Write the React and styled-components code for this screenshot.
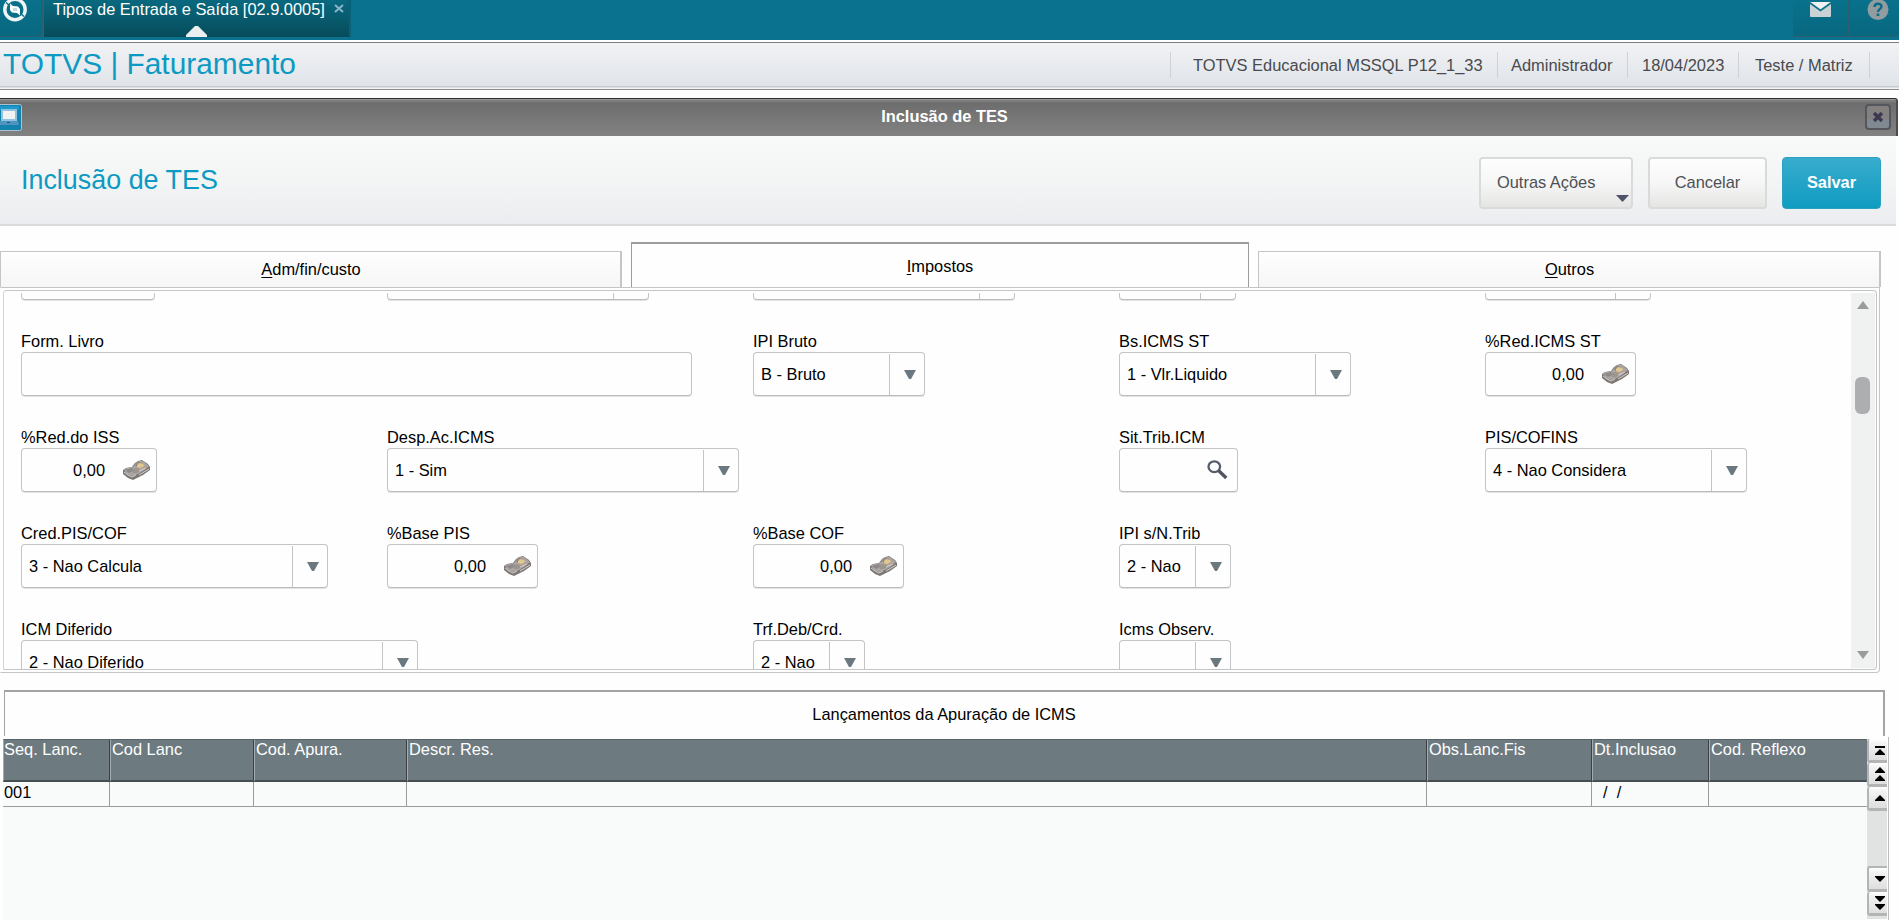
import React from 'react';
import styled, { createGlobalStyle } from 'styled-components';

const GlobalStyle = createGlobalStyle`
  *, *::before, *::after { box-sizing: border-box; }
  html, body { margin: 0; padding: 0; background: #fefefe; overflow: hidden; }
  body { font-family: "Liberation Sans", Arial, sans-serif; font-size: 16.4px; line-height: 20px; color: #000; }
`;

const Screen = styled.div`
  width: 1899px;
  height: 920px;
  display: flex;
  flex-direction: column;
  overflow: hidden;
  white-space: nowrap;
`;

/* ---------- Top bar ---------- */
const TopBar = styled.header`
  height: 40px;
  flex: none;
  display: flex;
  align-items: flex-start;
  background: #0a728f;
`;

const BarCell = styled.div`
  width: ${(p) => p.$w}px;
  height: 37px;
  flex: none;
  display: flex;
  padding-left: ${(p) => p.$pad}px;
  background: linear-gradient(#09718c, #086880);
  border-right: 2px solid ${(p) => (p.$edge ? '#2a5f70' : 'transparent')};
  border-bottom: 1px solid #2a5f70;
`;

const ProgramTab = styled.div`
  width: 307px;
  height: 37px;
  margin-left: 1px;
  padding: 0 0 0 9px;
  background: linear-gradient(#09697f, #064c5b);
  border-right: 2px solid #0a6177;
  color: #fff;
  display: grid;
  grid-template-columns: 281px 12px;
  grid-template-rows: 26px 11px;
`;

const TabName = styled.span`
  line-height: 19px;
`;

const CloseMark = styled.svg`
  margin-top: 4px;
`;

const TabPointer = styled.svg`
  grid-column: 1 / -1;
  margin-left: 133px;
`;

const Spacer = styled.div`
  flex: 1;
`;

/* ---------- Module bar ---------- */
const ModuleBar = styled.div`
  height: 48px;
  flex: none;
  margin-top: 2px;
  display: flex;
  border-top: 1px solid #7d7d82;
  border-bottom: 1px solid #8b8b90;
  background: linear-gradient(#f1f2f4, #e0e4e9 43px, #c6cbcf 43px, #c6cbcf 44px, #f3f4f5 45px);
`;

const ModuleName = styled.h1`
  margin: 0;
  padding-left: 3px;
  width: 1170px;
  font-size: 29.9px;
  font-weight: 400;
  line-height: 41px;
  color: #0d9ac2;
`;

const InfoItem = styled.div`
  width: ${(p) => p.$w}px;
  height: 26px;
  margin-top: 9px;
  padding-left: ${(p) => p.$pad}px;
  border-left: 1px solid #ccd2d5;
  line-height: 27px;
  font-size: 16.45px;
  color: #494a4e;
`;

/* ---------- Dialog ---------- */
const TitleBar = styled.div`
  height: 38px;
  flex: none;
  width: 1898px;
  margin-top: 8px;
  display: flex;
  border-top: 1px solid #2d2d2f;
  border-right: 2px solid #4b4b4f;
  border-radius: 0 3px 0 0;
  background: linear-gradient(#9a9a9a 1px, #7e7e7e 1px, #7a7a7a 3px, #6d6d6d 4px, #828282);
`;

const TitleIcon = styled.svg`
  margin-top: 5px;
`;

const TitleText = styled.div`
  width: 1843px;
  padding-left: 2px;
  text-align: center;
  font-weight: 700;
  line-height: 35px;
  color: #fff;
`;

const CloseBox = styled.button`
  width: 26px;
  height: 26px;
  margin: 5px 0 0 0;
  padding: 0;
  display: flex;
  align-items: center;
  justify-content: center;
  border: 2px solid #55555d;
  border-radius: 4px;
  background: linear-gradient(#858080 60%, #808992 62%);
`;

const ActionBar = styled.div`
  width: 1896px;
  height: 90px;
  flex: none;
  display: flex;
  align-items: flex-start;
  padding: 21px 15px 0 21px;
  gap: 15px;
  background: linear-gradient(#f8f9f9, #f4f5f5 45%, #ecedf0);
  border-bottom: 2px solid #d9dbdc;
`;

const Heading = styled.h2`
  flex: 1;
  margin: 0;
  font-size: 26.9px;
  font-weight: 400;
  line-height: 47px;
  color: #0d9ac2;
`;

const ActionButton = styled.button`
  width: ${(p) => p.$w}px;
  height: 52px;
  padding: 0 ${(p) => (p.$menu ? 2 : 0)}px 2px ${(p) => (p.$menu ? 16 : 0)}px;
  display: flex;
  align-items: center;
  justify-content: ${(p) => (p.$menu ? 'space-between' : 'center')};
  font: ${(p) => (p.$primary ? 700 : 400)} 16.4px "Liberation Sans", Arial, sans-serif;
  color: ${(p) => (p.$primary ? '#fff' : '#4c5055')};
  border: ${(p) => (p.$primary ? '1px solid #2aa0c3' : '2px solid #d9dada')};
  border-radius: 4px;
  background: ${(p) =>
    p.$primary ? 'linear-gradient(#38accd, #0f9cc1)' : 'linear-gradient(#fefefe, #f6f6f6 50%, #e5e5e4)'};
`;

const MenuArrow = styled.svg`
  margin-top: 33px;
`;

/* ---------- Tabs ---------- */
const Tabs = styled.div`
  height: 61px;
  flex: none;
  display: flex;
  align-items: flex-end;
  gap: 9px;
`;

const Tab = styled.div`
  width: ${(p) => p.$w}px;
  height: ${(p) => (p.$active ? 45 : 36)}px;
  text-align: center;
  line-height: ${(p) => (p.$active ? 45 : 34)}px;
  border: ${(p) => (p.$active ? '2px solid #9b9c9c' : '1px solid #c3c5c6')};
  border-bottom: 0;
  border-left-width: 1px;
  border-right-width: ${(p) => (p.$active ? 1 : 2)}px;
  padding-left: ${(p) => (p.$active ? 0 : 1)}px;
  background: ${(p) => (p.$active ? '#fefefe' : 'linear-gradient(#fefefe, #f6f6f6)')};
  u { text-decoration-thickness: 1px; text-underline-offset: 2px; }
`;

const Panel = styled.section`
  width: 1880px;
  height: 386px;
  flex: none;
  border: 1px solid #c3c5c6;
  border-left-color: transparent;
  border-radius: 0 0 4px 0;
  padding: 2px 2px 2px 2px;
`;

const PanelInner = styled.div`
  height: 380px;
  display: flex;
  padding: 2px 1px 0 0;
  border: 1px solid #c3c5c6;
  border-left-color: #d3d5d6;
  border-radius: 4px 4px 4px 0;
`;

const FormView = styled.div`
  flex: 1;
  overflow: hidden;
`;

const FormGrid = styled.div`
  margin: -61px 0 0 17px;
  display: grid;
  grid-template-columns: repeat(5, 366px);
  grid-auto-rows: 96px;
`;

const Field = styled.div`
  grid-column: ${(p) => p.$col};
  grid-row: ${(p) => p.$row};
  width: ${(p) => p.$w}px;
`;

const Label = styled.div`
  height: 24px;
  line-height: 27px;
`;

const Control = styled.div`
  height: 44px;
  display: flex;
  align-items: center;
  justify-content: ${(p) => (p.$end ? 'flex-end' : 'space-between')};
  padding: 0 ${(p) => p.$pr}px 0 7px;
  border: 1px solid #c2c4c5;
  border-bottom-color: #b9bbbc;
  box-shadow: 0 1px 0 #e2e3e3;
  border-radius: 4px;
`;

const Amount = styled.span`
  margin-right: 18px;
`;

const DropButton = styled.span`
  width: 35px;
  height: 41px;
  margin-top: 1px;
  display: flex;
  align-items: center;
  justify-content: center;
  padding: 0 0 1px 5px;
  border-left: 1px solid #c2c4c5;
`;

const ScrollTrack = styled.div`
  width: 24px;
  display: flex;
  flex-direction: column;
  align-items: center;
  padding: 8px 1px 9px 0;
  margin-bottom: 1px;
  background: #f0f2f1;
`;

const ScrollThumb = styled.div`
  width: 15px;
  height: 37px;
  margin: 68px 0 auto;
  border-radius: 6px;
  background: #adaeb0;
`;

/* ---------- Bottom grid ---------- */
const GridTitle = styled.div`
  width: 1881px;
  height: 46px;
  flex: none;
  margin: 17px 0 0 4px;
  border: 2px solid #a3a4a4;
  border-left-width: 1px;
  border-bottom: 0;
  text-align: center;
  line-height: 44px;
`;

const GridArea = styled.div`
  height: 183px;
  width: 1886px;
  margin: 1px 0 0 3px;
  flex: none;
  display: flex;
  border-right: 1px solid #bbbcbe;
`;

const Table = styled.div`
  width: 1864px;
  margin-top: 2px;
  background: #f9fbfa;
`;

const TableRow = styled.div`
  display: grid;
  grid-template-columns: 107px 144px 153px 1020px 165px 117px 158px;
`;

const HeadCell = styled.div`
  height: 43px;
  line-height: 18px;
  color: #fff;
  background: #6d7a80;
  border-top: 1px solid #596266;
  border-bottom: 2px solid #474e51;
  border-left: 1px solid #a3abae;
  border-right: 1px solid ${(p) => (p.$last ? '#6d7a80' : '#3c4042')};
  padding-left: ${(p) => (p.$first ? 0 : 1)}px;
`;

const Cell = styled.div`
  height: 25px;
  padding-left: ${(p) => (p.$indent ? 11 : 1)}px;
  line-height: 21px;
  white-space: pre;
  border-right: ${(p) => (p.$last ? 0 : 1)}px solid #9a9b9c;
  border-bottom: 1px solid #9a9b9c;
`;

const NavColumn = styled.div`
  width: 20px;
  margin: 2px 0 1px;
  display: flex;
  flex-direction: column;
  background: #e1e3e3;
`;

const NavButton = styled.div`
  height: ${(p) => (p.$apart ? 26 : 24)}px;
  flex: none;
  margin-top: ${(p) => (p.$apart ? 55 : 0)}px;
  display: flex;
  align-items: center;
  padding-left: 6px;
  border-left: 2px solid #b2b4b5;
  border-bottom: 3px solid #b2b4b5;
  border-top: ${(p) => (p.$apart ? 2 : 0)}px solid #b2b4b5;
  border-radius: 3px 0 0 3px;
  background: linear-gradient(#fff, #f2f2f2 20%, #dedede);
`;

const BottomRule = styled.div`
  height: 1px;
  flex: none;
  background: #bbbcbe;
`;

/* ---------- Drawings ---------- */
const Down = () => (
  <svg width="12" height="9" viewBox="0 0 12 9"><path d="M0 0H12L7 9H5Z" fill="#6b7880" /></svg>
);

const Calculator = () => (
  <svg width="27" height="20" viewBox="0 0 27 20">
    <path d="M0 10L3 8L9 7L12 3L15 1L19 0L25 4L27 7V10L20 15L14 18L10 20L5 18L0 14Z" fill="#7d7774" />
    <path d="M1 10L4 8L10 7L13 3L16 1L20 1L26 6L20 11L15 14L9 16L4 14Z" fill="#aaa6a4" />
    <path d="M2 10L9 8L12 10L6 13Z" fill="#8d8987" />
    <path d="M9 9L14 8L18 10L14 13L10 13Z" fill="#989492" />
    <path d="M12 5L15 2L18 2L14 7Z" fill="#8b8683" />
    <path d="M14 5L16 3L20 4L21 6L17 8L14 7Z" fill="#e3c78f" />
    <path d="M13 9L15 8L16 9L14 10ZM20 8L23 7L24 8L21 9ZM18 2L20 3L19 4Z" fill="#c99263" />
    <path d="M1 12L5 15L9 17L13 15M16 15L26 9M16 11L23 8" fill="none" stroke="#d5d1cf" strokeWidth="1" />
  </svg>
);

const Search = () => (
  <svg width="21" height="20" viewBox="0 0 21 20">
    <ellipse cx="7.3" cy="6.7" rx="5.8" ry="5.4" fill="none" stroke="#555d6b" strokeWidth="2.3" />
    <path d="M11.5 10.5L19.3 18" stroke="#50545f" strokeWidth="3.3" />
  </svg>
);

const navPaths = {
  first: 'M0 3H10V5H0ZM5 6L10 11V12H0V11Z',
  pageUp: 'M5 0L10 5V6H0V5ZM5 8L10 13V14H0V13Z',
  up: 'M5 4L10 9V10H0V9Z',
  down: 'M0 4H10V5L5 10L0 5Z',
  pageDown: 'M0 0H10V1L5 6L0 1ZM0 8H10V9L5 14L0 9Z',
};

const NavIcon = ({ kind }) => (
  <svg width="10" height="14" viewBox="0 0 10 14"><path d={navPaths[kind]} fill="#000" /></svg>
);

/* ---------- Data ---------- */
const fields = [
  { row: 1, col: 1, w: 134, kind: 'text' },
  { row: 1, col: 2, w: 262, kind: 'select' },
  { row: 1, col: 3, w: 262, kind: 'select' },
  { row: 1, col: 4, w: 117, kind: 'select' },
  { row: 1, col: 5, w: 166, kind: 'select' },
  { row: 2, col: 1, w: 671, kind: 'text', label: 'Form. Livro' },
  { row: 2, col: 3, w: 172, kind: 'select', label: 'IPI Bruto', value: 'B - Bruto' },
  { row: 2, col: 4, w: 232, kind: 'select', label: 'Bs.ICMS ST', value: '1 - Vlr.Liquido' },
  { row: 2, col: 5, w: 151, kind: 'amount', label: '%Red.ICMS ST', value: '0,00' },
  { row: 3, col: 1, w: 136, kind: 'amount', label: '%Red.do ISS', value: '0,00' },
  { row: 3, col: 2, w: 352, kind: 'select', label: 'Desp.Ac.ICMS', value: '1 - Sim' },
  { row: 3, col: 4, w: 119, kind: 'search', label: 'Sit.Trib.ICM' },
  { row: 3, col: 5, w: 262, kind: 'select', label: 'PIS/COFINS', value: '4 - Nao Considera' },
  { row: 4, col: 1, w: 307, kind: 'select', label: 'Cred.PIS/COF', value: '3 - Nao Calcula' },
  { row: 4, col: 2, w: 151, kind: 'amount', label: '%Base PIS', value: '0,00' },
  { row: 4, col: 3, w: 151, kind: 'amount', label: '%Base COF', value: '0,00' },
  { row: 4, col: 4, w: 112, kind: 'select', label: 'IPI s/N.Trib', value: '2 - Nao' },
  { row: 5, col: 1, w: 397, kind: 'select', label: 'ICM Diferido', value: '2 - Nao Diferido' },
  { row: 5, col: 3, w: 112, kind: 'select', label: 'Trf.Deb/Crd.', value: '2 - Nao' },
  { row: 5, col: 4, w: 112, kind: 'select', label: 'Icms Observ.' },
];

const columns = ['Seq. Lanc.', 'Cod Lanc', 'Cod. Apura.', 'Descr. Res.', 'Obs.Lanc.Fis', 'Dt.Inclusao', 'Cod. Reflexo'];
const firstRow = ['001', '', '', '', '', '/  /', ''];

function FormField({ row, col, w, kind, label, value }) {
  return (
    <Field $row={row} $col={col} $w={w}>
      <Label>{label}</Label>
      {kind === 'select' && (
        <Control $pr={0}>
          <span>{value}</span>
          <DropButton><Down /></DropButton>
        </Control>
      )}
      {kind === 'amount' && (
        <Control $pr={6} $end>
          <Amount>{value}</Amount>
          <Calculator />
        </Control>
      )}
      {kind === 'search' && <Control $pr={9} $end><Search /></Control>}
      {kind === 'text' && <Control $pr={8} />}
    </Field>
  );
}

export default function App() {
  return (
    <Screen>
      <GlobalStyle />
      <TopBar>
        <BarCell $w={43} $pad={3} $edge>
          <svg width="24" height="22" viewBox="0 0 24 22">
            <circle cx="12" cy="9.5" r="10.2" fill="none" stroke="#eef5f7" strokeWidth="3.4" />
            <path d="M7 3.500L10 6L15 6.500L17 9V15.500L14 13L9 12.500L7 10Z" fill="#fff" />
            <path d="M10 8H14V11H10Z" fill="#c3dbe2" />
            <path d="M3 2.500L7 6M17 13L21 16.500" stroke="#14718b" strokeWidth="1.6" />
          </svg>
        </BarCell>
        <ProgramTab>
          <TabName>Tipos de Entrada e Saída [02.9.0005]</TabName>
          <CloseMark width="10" height="10" viewBox="0 0 10 10">
            <path d="M1 1L9 8M9 1L1 8" stroke="#8bb4cc" strokeWidth="2" />
          </CloseMark>
          <TabPointer width="21" height="11" viewBox="0 0 21 11"><path d="M9 0H12L21 9V11H0V9Z" fill="#eceff0" /></TabPointer>
        </ProgramTab>
        <Spacer />
        <BarCell $w={57} $pad={17} $edge>
          <svg width="21" height="18" viewBox="0 0 21 18">
            <rect y="2" width="21" height="15" rx="1" fill="#c9d2d5" />
            <path d="M1 2H20L10.500 10Z" fill="#f0f2f2" />
            <path d="M0 3L10.500 10.500L21 3" fill="none" stroke="#0b6f8a" strokeWidth="1.700" />
          </svg>
        </BarCell>
        <BarCell $w={49} $pad={17}>
          <svg width="22" height="21" viewBox="0 0 22 21">
            <circle cx="11" cy="9.500" r="10.500" fill="#919ca1" />
            <path d="M7.500 7C7.500 2.800 14.500 2.800 14.500 6.500C14.500 9 11 8.800 11 12" fill="none" stroke="#0b6b86" strokeWidth="2.400" />
            <rect x="9.700" y="13.500" width="2.600" height="2.500" fill="#0b6b86" />
          </svg>
        </BarCell>
      </TopBar>

      <ModuleBar>
        <ModuleName>TOTVS | Faturamento</ModuleName>
        <InfoItem $w={327} $pad={22}>TOTVS Educacional MSSQL P12_1_33</InfoItem>
        <InfoItem $w={130} $pad={13}>Administrador</InfoItem>
        <InfoItem $w={111} $pad={14}>18/04/2023</InfoItem>
        <InfoItem $w={131} $pad={16}>Teste / Matriz</InfoItem>
        <InfoItem $w={20} $pad={0} />
      </ModuleBar>

      <TitleBar>
        <TitleIcon width="22" height="27" viewBox="0 0 22 27">
          <rect x="-4" y="0.500" width="25.500" height="26" rx="2" fill="#1382ad" stroke="#a9c3cf" />
          <rect x="-4" y="2" width="23" height="4" fill="#1d9acb" />
          <path d="M1 5H17V18H1Z" fill="#8fc3de" />
          <path d="M3 7H15V15H3Z" fill="#f1f3f3" />
          <path d="M0 17H18L19 21H0Z" fill="#5193bf" />
          <path d="M7 18H10V19H7Z" fill="#0d5d8c" />
        </TitleIcon>
        <TitleText>Inclusão de TES</TitleText>
        <CloseBox>
          <svg width="12" height="10" viewBox="0 0 12 10"><path d="M2 1L10 9M10 1L2 9" stroke="#3c3850" strokeWidth="3.400" /></svg>
        </CloseBox>
      </TitleBar>

      <ActionBar>
        <Heading>Inclusão de TES</Heading>
        <ActionButton $w={154} $menu>
          Outras Ações
          <MenuArrow width="13" height="7" viewBox="0 0 13 7"><path d="M0 0H13L6.500 7Z" fill="#50526a" /></MenuArrow>
        </ActionButton>
        <ActionButton $w={119}>Cancelar</ActionButton>
        <ActionButton $w={99} $primary>Salvar</ActionButton>
      </ActionBar>

      <Tabs>
        <Tab $w={622}><u>A</u>dm/fin/custo</Tab>
        <Tab $w={618} $active><u>I</u>mpostos</Tab>
        <Tab $w={623}><u>O</u>utros</Tab>
      </Tabs>

      <Panel>
        <PanelInner>
          <FormView>
            <FormGrid>
              {fields.map((f) => <FormField key={`${f.row}-${f.col}`} {...f} />)}
            </FormGrid>
          </FormView>
          <ScrollTrack>
            <svg width="12" height="8" viewBox="0 0 12 8"><path d="M6 0L12 8H0Z" fill="#999b9c" /></svg>
            <ScrollThumb />
            <svg width="12" height="8" viewBox="0 0 12 8"><path d="M6 8L12 0H0Z" fill="#999b9c" /></svg>
          </ScrollTrack>
        </PanelInner>
      </Panel>

      <GridTitle>Lançamentos da Apuração de ICMS</GridTitle>
      <GridArea>
        <Table>
          <TableRow>
            {columns.map((c, i) => <HeadCell key={c} $first={i === 0} $last={i === 6}>{c}</HeadCell>)}
          </TableRow>
          <TableRow>
            {firstRow.map((v, i) => <Cell key={columns[i]} $indent={i === 5} $last={i === 6}>{v}</Cell>)}
          </TableRow>
        </Table>
        <NavColumn>
          <NavButton><NavIcon kind="first" /></NavButton>
          <NavButton><NavIcon kind="pageUp" /></NavButton>
          <NavButton><NavIcon kind="up" /></NavButton>
          <NavButton $apart><NavIcon kind="down" /></NavButton>
          <NavButton><NavIcon kind="pageDown" /></NavButton>
        </NavColumn>
      </GridArea>
      <BottomRule />
    </Screen>
  );
}
